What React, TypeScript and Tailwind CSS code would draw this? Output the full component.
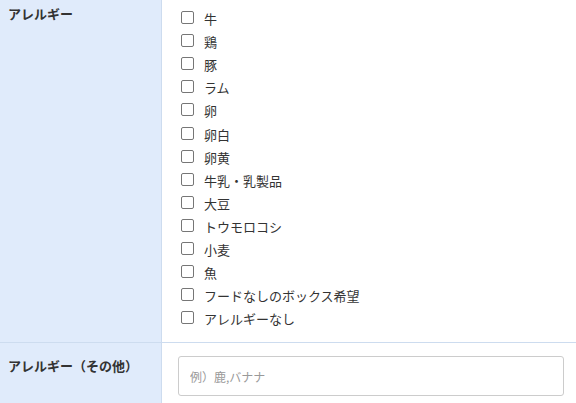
const ITEMS = [
  "牛",
  "鶏",
  "豚",
  "ラム",
  "卵",
  "卵白",
  "卵黄",
  "牛乳・乳製品",
  "大豆",
  "トウモロコシ",
  "小麦",
  "魚",
  "フードなしのボックス希望",
  "アレルギーなし",
];

export default function App() {
  return (
    <div
      className="w-[576px] h-[403px] overflow-hidden bg-white text-[#333] text-[13px]"
      style={{ fontFamily: '"Noto Sans CJK JP", "Liberation Sans", sans-serif' }}
    >
      {/* row 1 */}
      <div className="flex border-b border-[#cddcef]">
        <div className="w-[162px] shrink-0 bg-[#e0ebfb] border-r border-[#cddcef] px-2 pt-[4px] font-bold leading-[20px]">
          アレルギー
        </div>
        <div className="flex-1 pl-[19px] pt-[7px] pb-[12px]">
          {ITEMS.map((t) => (
            <label key={t} className="flex items-center h-[23.1px] leading-[23px]">
              <span className="w-[13px] h-[13px] -mt-[2px] rounded-[2px] border border-[#767676] bg-white shrink-0" />
              <span className="ml-[10px]">{t}</span>
            </label>
          ))}
        </div>
      </div>

      {/* row 2 */}
      <div className="flex h-[70px]">
        <div className="w-[162px] shrink-0 bg-[#e0ebfb] border-r border-[#cddcef] px-2 pt-[13px] font-bold leading-[20px]">
          アレルギー（その他）
        </div>
        <div className="flex-1 pl-[16px] pr-[12px] pt-[13px]">
          <input
            placeholder="例）鹿,バナナ"
            className="w-[386px] h-[40px] rounded-[3px] border border-[#cccccc] px-[11px] text-[12px] outline-none placeholder:text-[#999]"
            style={{ fontFamily: '"Noto Sans CJK JP", "Liberation Sans", sans-serif' }}
          />
        </div>
      </div>
    </div>
  );
}
